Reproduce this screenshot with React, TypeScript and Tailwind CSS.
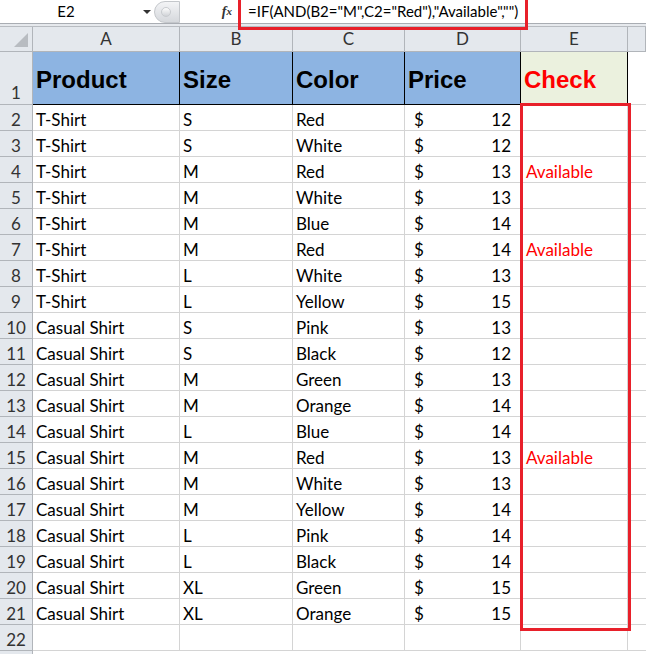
import React from "react";

type Row = [string, string, string, number, string];

const ROWS: Row[] = [
  ["T-Shirt", "S", "Red", 12, ""],
  ["T-Shirt", "S", "White", 12, ""],
  ["T-Shirt", "M", "Red", 13, "Available"],
  ["T-Shirt", "M", "White", 13, ""],
  ["T-Shirt", "M", "Blue", 14, ""],
  ["T-Shirt", "M", "Red", 14, "Available"],
  ["T-Shirt", "L", "White", 13, ""],
  ["T-Shirt", "L", "Yellow", 15, ""],
  ["Casual Shirt", "S", "Pink", 13, ""],
  ["Casual Shirt", "S", "Black", 12, ""],
  ["Casual Shirt", "M", "Green", 13, ""],
  ["Casual Shirt", "M", "Orange", 14, ""],
  ["Casual Shirt", "L", "Blue", 14, ""],
  ["Casual Shirt", "M", "Red", 13, "Available"],
  ["Casual Shirt", "M", "White", 13, ""],
  ["Casual Shirt", "M", "Yellow", 14, ""],
  ["Casual Shirt", "L", "Pink", 14, ""],
  ["Casual Shirt", "L", "Black", 14, ""],
  ["Casual Shirt", "XL", "Green", 15, ""],
  ["Casual Shirt", "XL", "Orange", 15, ""],
];

const COLS = "grid-cols-[33px_147px_113px_112px_116px_107px_1fr]";
const cellBase = "border-r border-b border-[#d4d4d4] flex items-center pt-[4px] pl-[3px] h-[26px] text-[17px] leading-none";
const cell = `${cellBase} text-black`;
const rowHead = "border-r border-b border-[#b1b5ba] bg-[#e4e8ed] flex items-center justify-center pt-[4px] h-[26px] text-[17px] leading-none text-[#333]";
const headFont = { fontFamily: "'Liberation Sans', Arial, sans-serif" };

export default function App() {
  return (
    <div className="w-[646px] h-[654px] overflow-hidden bg-white relative" style={{ fontFamily: "Lato, 'Open Sans', sans-serif" }}>
      {/* formula bar */}
      <div className="flex h-[24px] border-b border-[#a9adb3] bg-white">
        <div className="w-[154px] relative flex items-center justify-center text-[15px] text-black">
          <span className="-ml-[22px]">E2</span>
          <span className="absolute right-[3px] top-[10px] w-0 h-0 border-l-[4px] border-r-[4px] border-t-[4px] border-l-transparent border-r-transparent border-t-[#333]" />
        </div>
        <div className="w-[26px] mt-[1px] h-[22px] rounded-l-full bg-gradient-to-b from-[#f3f4f6] to-[#d5d8dc] border border-[#c4c7cb] flex items-center pl-[6px]">
          <div className="w-[10px] h-[10px] rounded-full bg-gradient-to-b from-[#fdfdfd] to-[#d0d3d7] border border-[#c8cbcf]" />
        </div>
        <div className="w-[58px] flex items-center justify-end pr-[6px] text-[14px] italic font-bold text-[#333]" style={{ fontFamily: "'Liberation Serif', serif" }}>
          f<span className="text-[11px]">x</span>
        </div>
        <div className="flex-1 flex items-center pl-[10px] text-[15px] text-black whitespace-nowrap">
          =IF(AND(B2="M",C2="Red"),"Available","")
        </div>
      </div>
      <div className="h-[3px] bg-[#e6e9ed] border-b border-[#b8bcc1]" />

      {/* sheet */}
      <div className={`grid ${COLS}`}>
        <div className="h-[25px] bg-[#e4e8ed] border-r border-b border-[#b1b5ba] relative">
          <div className="absolute right-[4px] bottom-[4px] w-0 h-0" style={{ borderBottom: "14px solid #b8bcc1", borderLeft: "14px solid transparent" }} />
        </div>
        {["A", "B", "C", "D", "E", ""].map((c, i) => (
          <div key={i} className="h-[25px] bg-[#e4e8ed] border-r border-b border-[#b1b5ba] flex items-center justify-center text-[17px] text-[#333]">{c}</div>
        ))}

        <div className={`${rowHead} h-[53px] items-end pb-[3px]`}>1</div>
        {["Product", "Size", "Color", "Price"].map((h) => (
          <div key={h} className="h-[53px] bg-[#8db4e2] border-r border-b border-black flex items-end pb-[6px] pl-[3px] text-[24px] font-bold text-black" style={headFont}>{h}</div>
        ))}
        <div className="h-[53px] bg-[#ebf1de] border-r border-b border-black flex items-end pb-[6px] pl-[3px] text-[24px] font-bold text-[#ff0000]" style={headFont}>Check</div>
        <div className="h-[53px] border-b border-[#d4d4d4]" />

        {ROWS.map((r, i) => (
          <React.Fragment key={i}>
            <div className={rowHead}>{i + 2}</div>
            <div className={cell}>{r[0]}</div>
            <div className={cell}>{r[1]}</div>
            <div className={cell}>{r[2]}</div>
            <div className={`${cell} justify-between pl-[9px] pr-[9px]`}><span>$</span><span>{r[3]}</span></div>
            <div className={`${cellBase} pl-[5px] text-[#ff0000]`}>{r[4]}</div>
            <div className="h-[26px] border-b border-[#d4d4d4]" />
          </React.Fragment>
        ))}
        <div className={rowHead}>22</div>
        {[0, 1, 2, 3, 4].map((k) => <div key={k} className={cell} />)}
        <div className="h-[26px] border-b border-[#d4d4d4]" />
        <div className="h-[26px] border-r border-[#b1b5ba] bg-[#e4e8ed]" />
      </div>

      {/* red highlight boxes */}
      <div className="absolute left-[238px] top-[-3px] w-[290px] h-[33px] border-[3px] border-[#e8202a] pointer-events-none" />
      <div className="absolute left-[520px] top-[103px] w-[111px] h-[528px] border-[3px] border-[#e8202a] pointer-events-none" />
    </div>
  );
}
